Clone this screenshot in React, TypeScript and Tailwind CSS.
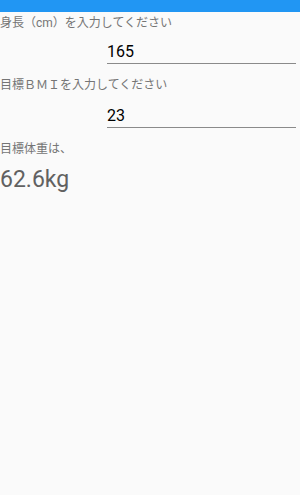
export default function App() {
  return (
    <div
      className="w-[300px] h-[495px] bg-[#fafafa] flex flex-col"
      style={{ fontFamily: 'Roboto, "Noto Sans CJK JP", sans-serif' }}
    >
      <div className="h-3 bg-[#2196f3]" />
      <div className="flex flex-col">
        <p className="text-[12px] leading-4 text-[#757575] mt-[3px]">身長（cm）を入力してください</p>
        <div className="flex justify-end pr-1 mt-[11px]">
          <div className="w-[189px] border-b border-[#8a8a8a] text-[16px] leading-5 text-black pb-[1px]">165</div>
        </div>
        <p className="text-[12px] leading-4 text-[#757575] mt-[13px]">目標ＢＭＩを入力してください</p>
        <div className="flex justify-end pr-1 mt-[13px]">
          <div className="w-[189px] border-b border-[#8a8a8a] text-[16px] leading-5 text-black pb-[1px]">23</div>
        </div>
        <p className="text-[12px] leading-4 text-[#757575] mt-[13px]">目標体重は、</p>
        <p className="text-[23px] leading-7 text-[#616161] mt-[9px]">62.6kg</p>
      </div>
    </div>
  );
}
